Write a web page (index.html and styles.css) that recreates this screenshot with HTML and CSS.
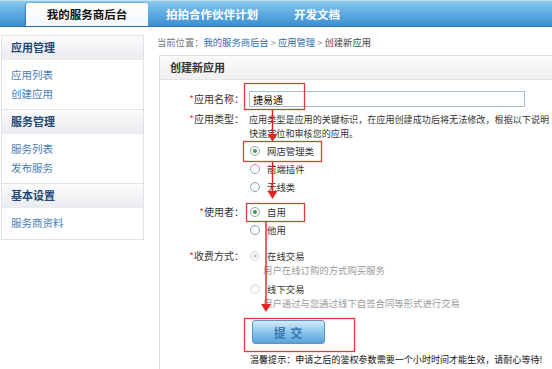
FILE: index.html
```html
<!DOCTYPE html>
<html lang="zh">
<head>
    <meta charset="UTF-8">
    <meta name="viewport" content="width=device-width, initial-scale=1.0">
    <title>创建新应用</title>
    <link rel="stylesheet" href="styles.css">
</head>
<body>

    <!-- 顶部导航 -->
    <div class="topbar">
        <a class="tab active">我的服务商后台</a>
        <a class="tab">拍拍合作伙伴计划</a>
        <a class="tab">开发文档</a>
    </div>

    <div class="wrap">
        <!-- 左侧菜单 -->
        <div class="sidebar">
            <div class="side-head">应用管理</div>
            <ul class="side-list">
                <li><a>应用列表</a></li>
                <li><a>创建应用</a></li>
            </ul>
            <div class="side-head">服务管理</div>
            <ul class="side-list">
                <li><a>服务列表</a></li>
                <li><a>发布服务</a></li>
            </ul>
            <div class="side-head">基本设置</div>
            <ul class="side-list last">
                <li><a>服务商资料</a></li>
            </ul>
        </div>

        <div class="main">
            <div class="crumb">
                当前位置：<a>我的服务商后台</a> <span class="sep">&gt;</span> <a>应用管理</a> <span class="sep">&gt;</span> <span class="cur">创建新应用</span>
            </div>

            <div class="panel">
                <div class="panel-head">创建新应用</div>
                <div class="panel-body">
                    <div class="row row-name">
                        <div class="label"><i>*</i>应用名称：</div>
                        <div class="field"><input class="text-input" type="text" value="捷易通"></div>
                    </div>

                    <div class="row row-type">
                        <div class="label"><i>*</i>应用类型：</div>
                        <div class="field">
                            <p class="desc">应用类型是应用的关键标识，在应用创建成功后将无法修改，根据以下说明<br>快速定位和审核您的应用。</p>
                            <div class="opt"><span class="radio on"></span>网店管理类</div>
                            <div class="opt"><span class="radio"></span>前端插件</div>
                            <div class="opt"><span class="radio"></span>无线类</div>
                        </div>
                    </div>

                    <div class="row row-user">
                        <div class="label"><i>*</i>使用者：</div>
                        <div class="field">
                            <div class="opt"><span class="radio on"></span>自用</div>
                            <div class="opt"><span class="radio"></span>他用</div>
                        </div>
                    </div>

                    <div class="row row-fee">
                        <div class="label"><i>*</i>收费方式：</div>
                        <div class="field">
                            <div class="opt fee"><span class="radio off on"></span>在线交易</div>
                            <div class="sub">用户在线订购的方式购买服务</div>
                            <div class="opt fee second"><span class="radio off"></span>线下交易</div>
                            <div class="sub">用户通过与您通过线下自签合同等形式进行交易</div>
                            <button class="submit">提 交</button>
                            <p class="tip">温馨提示：申请之后的鉴权参数需要一个小时时间才能生效，请耐心等待!</p>
                        </div>
                    </div>
                </div>
            </div>
        </div>
    </div>

    <!-- 标注 -->
    <svg class="marks" width="552" height="369" viewBox="0 0 552 369">
        <g fill="none" stroke="#e03a3a" stroke-width="1.3">
            <rect x="244.5" y="83.5" width="60" height="26"/>
            <rect x="243.5" y="141.5" width="78" height="20"/>
            <rect x="246.5" y="203.5" width="58" height="18"/>
            <rect x="244.5" y="318.5" width="110" height="33"/>
        </g>
        <g stroke="#e52222" stroke-width="1.4">
            <line x1="272.5" y1="110" x2="272.5" y2="135"/>
            <line x1="272.5" y1="162" x2="272.5" y2="192"/>
            <line x1="266" y1="222" x2="266" y2="305"/>
        </g>
        <g fill="#e52222">
            <polygon points="267.5,134 277.5,134 272.5,141.5"/>
            <polygon points="267.5,191 277.5,191 272.5,199"/>
            <polygon points="261,304 271,304 266,312"/>
        </g>
    </svg>

</body>
</html>
```

FILE: styles.css
```css
body {
    margin: 0;
    width: 552px;
    height: 369px;
    overflow: hidden;
    position: relative;
    background: #fff;
    font-family: "Noto Sans CJK SC", "Liberation Sans", sans-serif;
    color: #333;
}
a {
    text-decoration: none;
    cursor: pointer;
}

/* 顶部导航 */
.topbar {
    height: 23px;
    padding-top: 2px;
    padding-left: 26px;
    display: flex;
    align-items: flex-end;
    border-top: 1px solid #c3e3f5;
    border-bottom: 1px solid #3276b0;
    background: linear-gradient(#8ccbef, #5eaae0 50%, #3f8fcf);
}
.tab {
    height: 23px;
    line-height: 23px;
    padding: 0 18px;
    font-size: 11.5px;
    font-weight: bold;
    color: #fff;
}
.tab.active {
    width: 122px;
    padding: 0;
    text-align: center;
    color: #111;
    border-radius: 3px 3px 0 0;
    background: linear-gradient(#fff, #f3f7fa);
    box-shadow: -1px 0 2px rgba(0, 40, 90, 0.35);
}

.wrap {
    display: flex;
    padding-top: 8px;
}

/* 左侧菜单 */
.sidebar {
    width: 141px;
    margin-left: 1px;
    flex-shrink: 0;
    border: 1px solid #dce2e8;
    height: 203px;
}
.side-head {
    height: 24px;
    line-height: 22px;
    padding-left: 9px;
    font-size: 11px;
    font-weight: bold;
    color: #1c4775;
    background: linear-gradient(#fbfbfc, #e9ebee);
}
.side-list {
    list-style: none;
    margin: 0;
    padding: 5px 0 6px 9px;
    border-bottom: 1px solid #dfe3e8;
}
.side-list.last {
    border-bottom: none;
}
.side-list li {
    line-height: 19px;
    font-size: 10.5px;
}
.side-list a {
    color: #4a7cb4;
}

/* 主体 */
.main {
    width: 420px;
    flex-shrink: 0;
    margin-left: 15px;
}
.crumb {
    height: 20px;
    line-height: 14px;
    font-size: 9.3px;
    color: #777;
    margin-left: -2px;
}
.crumb a {
    color: #2c6cb0;
}
.crumb .sep {
    color: #999;
}
.crumb .cur {
    color: #444;
}
.panel {
    border: 1px solid #dedede;
    border-right: none;
    height: 320px;
}
.panel-head {
    height: 23px;
    line-height: 23px;
    padding-left: 10px;
    font-size: 11px;
    font-weight: bold;
    color: #333;
    border-bottom: 1px solid #e4e4e4;
    background: linear-gradient(#fbfbfb, #efefef);
}
.panel-body {
    padding-top: 11px;
}

/* 表单 */
.row {
    display: flex;
}
.label {
    width: 84px;
    padding-right: 5px;
    text-align: right;
    font-size: 10px;
    color: #333;
    flex-shrink: 0;
}
.label i {
    font-style: normal;
    color: #e33;
}
.field {
    flex: 1;
    font-size: 9.4px;
}
.row-name .label {
    line-height: 16px;
}
.text-input {
    display: block;
    width: 276px;
    height: 16px;
    box-sizing: border-box;
    margin: 0;
    padding: 0 3px;
    border: 1px solid #a9bccf;
    font-family: inherit;
    font-size: 10px;
    color: #111;
    outline: none;
}
.row-type {
    margin-top: 5px;
}
.row-type .label {
    line-height: 14px;
}
.desc {
    margin: 0 0 2px;
    line-height: 14px;
    font-size: 9.1px;
    white-space: nowrap;
    color: #333;
}
.opt {
    display: flex;
    align-items: center;
    height: 18px;
    color: #333;
}
.row-user {
    margin-top: 7px;
}
.row-user .label {
    line-height: 18px;
}
.radio {
    width: 8px;
    height: 8px;
    margin: 0 7px 0 1px;
    border: 1px solid #8fa3b8;
    border-radius: 50%;
    background: linear-gradient(#f4f6f8, #fff);
    display: flex;
    align-items: center;
    justify-content: center;
}
.radio.on::after {
    content: "";
    width: 4px;
    height: 4px;
    border-radius: 50%;
    background: #3c9c3c;
}
.radio.off {
    border-color: #d6d6d6;
}
.radio.off.on::after {
    background: #cfcfcf;
}
.row-fee {
    margin-top: 9px;
}
.row-fee .label {
    line-height: 16px;
}
.opt.fee {
    height: 16px;
}
.opt.second {
    margin-top: 5px;
}
.sub {
    line-height: 12px;
    margin-left: 14px;
    color: #9a9a9a;
    white-space: nowrap;
}
.submit {
    display: block;
    margin: 11px 0 0 3px;
    width: 73px;
    height: 24px;
    padding: 0;
    border: 1px solid #5a94c6;
    border-radius: 3px;
    background: linear-gradient(#d4ecfa, #8cc6ee 50%, #5aa2d9);
    font-family: inherit;
    font-size: 12px;
    font-weight: bold;
    letter-spacing: 1px;
    color: #3a74b0;
    cursor: pointer;
}
.tip {
    margin: 10px 0 0 1px;
    line-height: 12px;
    font-size: 9.05px;
    white-space: nowrap;
    color: #111;
}

/* 标注 */
.marks {
    position: absolute;
    left: 0;
    top: 0;
    pointer-events: none;
}
```
